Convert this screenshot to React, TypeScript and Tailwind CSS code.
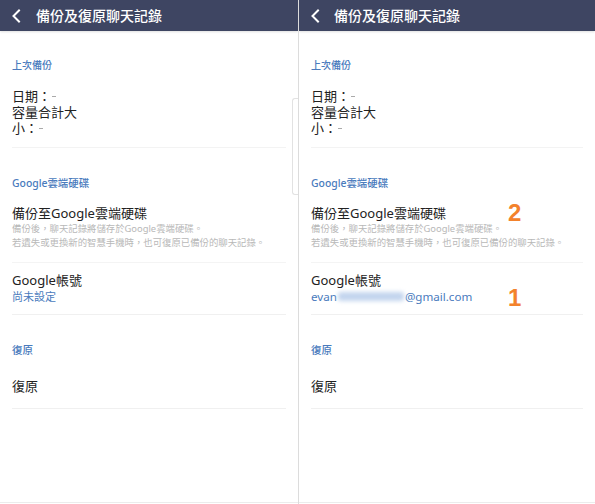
import React from "react";

const FONT = { fontFamily: '"Noto Sans", "Noto Sans CJK TC", sans-serif' };

function Chevron() {
  return (
    <svg width="10" height="14" viewBox="0 0 10 14" className="shrink-0">
      <path d="M8 1.5 L2.5 7 L8 12.5" fill="none" stroke="#ffffff" strokeWidth="2" strokeLinecap="square" />
    </svg>
  );
}

function Dash() {
  return <span className="ml-[1px] inline-block h-[1px] w-[4px] translate-y-[-4px] bg-[#aaaaaa]" />;
}

function Panel({ right }: { right?: boolean }) {
  return (
    <div className="relative flex h-full flex-col bg-white">
      <div className="flex h-[31px] shrink-0 items-center bg-[#3e4562] pl-[11px] shadow-[0_1px_2px_rgba(0,0,0,0.12)]">
        <Chevron />
        <span className={`${right ? "ml-[14px]" : "ml-[15px]"} text-[14px] font-medium leading-none text-white`}>備份及復原聊天記錄</span>
      </div>
      <div className="flex flex-col px-[12px]">
        <div className="mt-[26px] text-[10px] font-medium leading-[16px] text-[#4a7bbd]">上次備份</div>
        <div className="mt-[15px] pb-[11px] text-[13px] leading-[16px] text-[#222] border-b border-[#f3f3f3]">
          <div className="h-[16px]">日期：<Dash /></div>
          <div className="h-[16px]">容量合計大</div>
          <div className="h-[16px]">小：<Dash /></div>
        </div>
        <div className="mt-[27px] text-[10.4px] font-medium leading-[16px] text-[#4a7bbd]">Google雲端硬碟</div>
        <div className="mt-[13px] text-[13px] leading-[18px] text-[#222]">備份至Google雲端硬碟</div>
        <div className="text-[9.4px] leading-[14px] text-[#b8b8b8] pb-[12px] border-b border-[#f4f4f4]">
          <div>備份後，聊天記錄將儲存於Google雲端硬碟。</div>
          <div>若遺失或更換新的智慧手機時，也可復原已備份的聊天記錄。</div>
        </div>
        <div className="mt-[8px] text-[13px] leading-[18px] text-[#222]">Google帳號</div>
        {right ? (
          <div className="h-[26px] text-[11.6px] leading-[16px] text-[#4a7bbd] border-b border-[#f0f0f0]">
            evan<span className="mx-[1px] inline-block h-[9px] w-[66px] rounded-[3px] bg-[#c3d5ee] blur-[2px]" />@gmail.com
          </div>
        ) : (
          <div className="h-[26px] text-[11px] leading-[16px] text-[#4a7bbd] border-b border-[#f0f0f0]">尚未設定</div>
        )}
        <div className="mt-[27px] text-[10.5px] font-medium leading-[16px] text-[#4a7bbd]">復原</div>
        <div className="mt-[19px] text-[13px] leading-[18px] text-[#222] pb-[13px] border-b border-[#f0f0f0]">復原</div>
      </div>
      <div className="mt-auto h-[2px] border-t border-[#ececec]" />
      {!right && (
        <div className="absolute left-[292px] top-[98px] h-[97px] w-[6px] rounded-l-[3px] border border-r-0 border-[#e2e2e2] bg-white" />
      )}
      {right && (
        <>
          <div className="absolute left-[209px] top-[199px] text-[24px] font-bold leading-[28px] text-[#f3822c]" style={{ fontFamily: '"Liberation Sans", sans-serif' }}>2</div>
          <div className="absolute left-[209px] top-[284px] text-[24px] font-bold leading-[28px] text-[#f3822c]" style={{ fontFamily: '"Liberation Sans", sans-serif' }}>1</div>
        </>
      )}
    </div>
  );
}

export default function App() {
  return (
    <div className="flex h-[504px] w-[595px] overflow-hidden bg-[#f2f2f2]" style={FONT}>
      <div className="h-full w-[298px] overflow-hidden">
        <Panel />
      </div>
      <div className="h-full flex-1 border-l border-[#dcdcdc] overflow-hidden">
        <Panel right />
      </div>
    </div>
  );
}
